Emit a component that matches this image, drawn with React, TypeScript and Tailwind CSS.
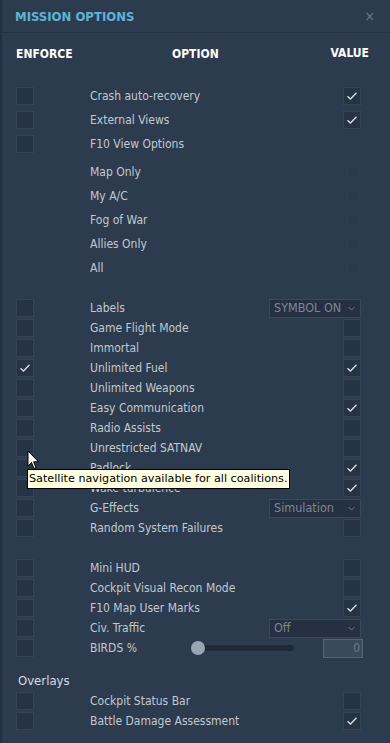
import React from "react";

type Row = {
  label: string;
  value?: "check" | "empty" | "none" | { select: string } | "slider";
  enforced?: boolean;
};

const block1: Row[] = [
  { label: "Crash auto-recovery", value: "check" },
  { label: "External Views", value: "check" },
  { label: "F10 View Options", value: "none" },
];

const radios = ["Map Only", "My A/C", "Fog of War", "Allies Only", "All"];

const block2: Row[] = [
  { label: "Labels", value: { select: "SYMBOL ON" } },
  { label: "Game Flight Mode", value: "empty" },
  { label: "Immortal", value: "empty" },
  { label: "Unlimited Fuel", value: "check", enforced: true },
  { label: "Unlimited Weapons", value: "empty" },
  { label: "Easy Communication", value: "check" },
  { label: "Radio Assists", value: "empty" },
  { label: "Unrestricted SATNAV", value: "empty" },
  { label: "Padlock", value: "check" },
  { label: "Wake turbulence", value: "check" },
  { label: "G-Effects", value: { select: "Simulation" } },
  { label: "Random System Failures", value: "empty" },
];

const block3: Row[] = [
  { label: "Mini HUD", value: "empty" },
  { label: "Cockpit Visual Recon Mode", value: "empty" },
  { label: "F10 Map User Marks", value: "check" },
  { label: "Civ. Traffic", value: { select: "Off" } },
  { label: "BIRDS %", value: "slider" },
];

const overlays: Row[] = [
  { label: "Cockpit Status Bar", value: "empty" },
  { label: "Battle Damage Assessment", value: "check" },
];

function Box({ checked }: { checked?: boolean }) {
  return (
    <div className="w-[18px] h-[18px] bg-[#263344] border border-[#344355] flex items-center justify-center">
      {checked && (
        <svg width="12" height="10" viewBox="0 0 12 10">
          <path d="M1.5 5.2 L4.5 8 L10.5 1.8" fill="none" stroke="#d6dade" strokeWidth="1.4" />
        </svg>
      )}
    </div>
  );
}

function Select({ text }: { text: string }) {
  return (
    <div className="w-[92px] h-[19px] bg-[#253142] border border-[#3a495a] flex items-center justify-between pl-[4px] pr-[5px]">
      <span className="text-[12.5px] text-[#7c8794] leading-none">{text}</span>
      <svg width="7" height="5" viewBox="0 0 7 5">
        <path d="M0.5 1 L3.5 4 L6.5 1" fill="none" stroke="#6f7a87" strokeWidth="1" />
      </svg>
    </div>
  );
}

function Value({ v }: { v: Row["value"] }) {
  if (v === "check") return <Box checked />;
  if (v === "empty") return <Box />;
  if (v === "none" || v === undefined || v === "slider") return null;
  return <Select text={v.select} />;
}

function OptionRow({ row, h }: { row: Row; h: string }) {
  return (
    <div className={`flex items-center ${h}`}>
      <div className="w-[88px] pl-[14px] shrink-0">
        <Box checked={row.enforced} />
      </div>
      <div className="flex-1 text-[12px] text-[#c3c8ce] whitespace-nowrap">{row.label}</div>
      {row.value === "slider" ? (
        <div className="flex items-center">
          <div className="relative w-[100px] h-[6px] bg-[#1f2a37] rounded-[2px] mr-[29px]">
            <div className="absolute left-[-3px] top-[-4px] w-[14px] h-[14px] rounded-full bg-[#9aa5b2]" />
          </div>
          <div className="w-[40px] h-[19px] bg-[#3a4a5c] border border-[#55657a] flex items-center justify-end pr-[2px] mr-[-2px]">
            <span className="text-[12px] text-[#6e7a88] leading-none">0</span>
          </div>
        </div>
      ) : (
        <div className="w-[100px] flex justify-end">
          <Value v={row.value} />
        </div>
      )}
    </div>
  );
}

export default function App() {
  return (
    <div
      className="relative w-[390px] h-[743px] bg-[#2c3b4e] overflow-hidden border-l-[2px] border-[#223040]"
      style={{ fontFamily: "'DejaVu Sans Condensed', 'DejaVu Sans', sans-serif" }}
    >
      {/* Title bar */}
      <div className="h-[33px] flex items-center justify-between pl-[13px] pr-[15px] pt-[1px] border-b border-[#233142]">
        <span className="text-[13px] font-bold text-[#5db3d8]">MISSION OPTIONS</span>
        <span className="text-[14px] text-[#6b7a8b]">×</span>
      </div>

      {/* Column headers */}
      <div className="h-[40px] flex items-center pl-[14px] pr-[21px] text-[12px] font-bold text-white">
        <span className="w-[156px] mt-[2px]">ENFORCE</span>
        <span className="flex-1 mt-[2px]">OPTION</span>
        <span className="-mt-[1px]">VALUE</span>
      </div>

      <div className="flex flex-col pr-[29px] mt-[11px]">
        {block1.map((r) => (
          <OptionRow key={r.label} row={r} h="h-[24px]" />
        ))}
        <div className="mt-[4px] flex flex-col">
          {radios.map((r) => (
            <div key={r} className="flex items-center h-[24px]">
              <div className="w-[88px] shrink-0" />
              <div className="flex-1 text-[12px] text-[#c3c8ce]">{r}</div>
              <div className="w-[13px] h-[13px] rounded-full border border-[#324156] bg-[#2a3a4c] mr-[2px]" />
            </div>
          ))}
        </div>
        <div className="mt-[18px] flex flex-col">
          {block2.map((r) => (
            <OptionRow key={r.label} row={r} h="h-[20px]" />
          ))}
        </div>
        <div className="mt-[20px] flex flex-col">
          {block3.map((r) => (
            <OptionRow key={r.label} row={r} h="h-[20px]" />
          ))}
        </div>
        <div className="mt-[12px] h-[21px] pl-[16px] flex items-center text-[13px] text-[#d8dce0]">
          Overlays
        </div>
        <div className="flex flex-col">
          {overlays.map((r) => (
            <OptionRow key={r.label} row={r} h="h-[20px]" />
          ))}
        </div>
      </div>

      {/* Tooltip */}
      <div
        className="absolute left-[25px] top-[469px] h-[20px] px-[1px] bg-[#ffffe1] border border-black flex items-center"
        style={{ fontFamily: "'DejaVu Sans', sans-serif" }}
      >
        <span className="text-[11.2px] text-black whitespace-nowrap">
          Satellite navigation available for all coalitions.
        </span>
      </div>

      {/* Mouse cursor */}
      <svg className="absolute left-[25px] top-[450px]" width="13" height="20" viewBox="0 0 13 20">
        <path d="M1 1 L1 16 L4.5 12.5 L7 18.5 L9 17.6 L6.6 11.8 L11.5 11.8 Z" fill="#fff" stroke="#000" strokeWidth="1" />
      </svg>
    </div>
  );
}
